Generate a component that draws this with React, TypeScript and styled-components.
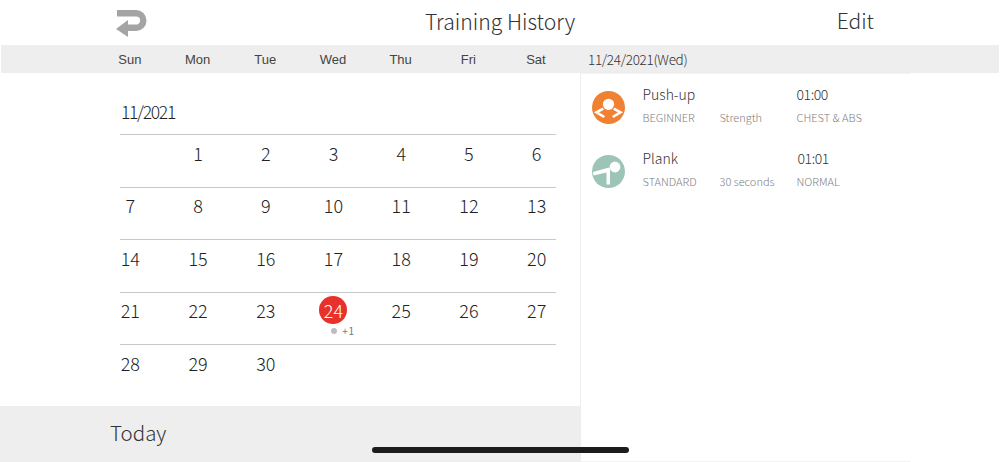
import { createGlobalStyle, styled } from "styled-components";

const weeks: (number | null)[][] = [
  [null, 1, 2, 3, 4, 5, 6],
  [7, 8, 9, 10, 11, 12, 13],
  [14, 15, 16, 17, 18, 19, 20],
  [21, 22, 23, 24, 25, 26, 27],
  [28, 29, 30, null, null, null, null],
];

const dayNames = ["Sun", "Mon", "Tue", "Wed", "Thu", "Fri", "Sat"];

const GlobalStyle = createGlobalStyle`
  html, body { margin: 0; padding: 0; background: #fff; }
  body {
    width: 1000px;
    height: 462px;
    overflow: hidden;
    font-family: "Noto Sans CJK JP", "Noto Sans", sans-serif;
    font-weight: 300;
    color: #333;
  }
`;

const Screen = styled.div`
  position: relative;
  width: 1000px;
  height: 462px;
  display: flex;
  flex-direction: column;
  overflow: hidden;
`;

const Header = styled.header`
  height: 45px;
  display: grid;
  grid-template-columns: 1fr auto 1fr;
  align-items: center;
  padding: 0 126px;
`;

const BackButton = styled.div`
  display: flex;
  align-items: center;
  margin-left: -11px;
`;

const Title = styled.h1`
  margin: 0 0 3px;
  font-size: 21.2px;
  font-weight: 300;
  line-height: 42px;
  color: #333;
`;

const EditLink = styled.div`
  justify-self: end;
  font-size: 21px;
  line-height: 41px;
  margin-bottom: 4px;
  color: #333;
`;

const Band = styled.div`
  height: 28px;
  margin: 0 1px;
  background: #eeeeee;
  display: flex;
  align-items: center;
`;

const WeekDays = styled.div`
  width: 579px;
  padding-left: 95px;
  box-sizing: border-box;
  display: grid;
  grid-template-columns: repeat(7, 67.7px);
`;

const WeekDay = styled.div`
  text-align: center;
  font-family: "Liberation Sans", Arial, sans-serif;
  font-size: 13px;
  font-weight: 400;
  color: #444;
`;

const SelectedDate = styled.div`
  padding-left: 8px;
  font-size: 13.5px;
  letter-spacing: -0.3px;
  color: #333;
`;

const Body = styled.main`
  flex: 1;
  display: flex;
  min-height: 0;
`;

const LeftColumn = styled.section`
  width: 580px;
  display: flex;
  flex-direction: column;
  flex-shrink: 0;
`;

const Calendar = styled.div`
  height: 333px;
  padding: 27px 0 0 120px;
  box-sizing: border-box;
`;

const MonthLabel = styled.div`
  height: 34px;
  padding-left: 1px;
  font-size: 17.5px;
  letter-spacing: -1.3px;
  line-height: 24px;
  color: #222;
`;

const Week = styled.div`
  width: 436px;
  height: 52.5px;
  box-sizing: border-box;
  border-top: 1.5px solid #c8c8c8;
`;

const WeekCells = styled.div`
  margin: 0 -14px 0 -24px;
  display: grid;
  grid-template-columns: repeat(7, 1fr);
`;

const DayCell = styled.div`
  position: relative;
  height: 40px;
  display: flex;
  justify-content: center;
  align-items: center;
`;

const DayNumber = styled.span<{ $active?: boolean }>`
  width: 28px;
  height: 28px;
  margin: -5px 0 0 1px;
  border-radius: 50%;
  display: flex;
  align-items: center;
  justify-content: center;
  font-size: 18px;
  background: ${(p) => (p.$active ? "#e8312a" : "transparent")};
  color: ${(p) => (p.$active ? "#fff" : "#222")};
`;

const RecordMark = styled.div`
  position: absolute;
  left: 32px;
  top: 32px;
  display: flex;
  align-items: center;
  gap: 5px;
  font-size: 10px;
  font-weight: 400;
  line-height: 12px;
  word-spacing: -1.5px;
  color: #777;
  white-space: nowrap;
`;

const MarkDot = styled.span`
  width: 6px;
  height: 6px;
  border-radius: 50%;
  background: #bdbdbd;
`;

const TodayBar = styled.div`
  flex: 1;
  background: #eeeeee;
  padding: 0 0 4px 110px;
  display: flex;
  align-items: center;
  font-size: 20.5px;
  color: #333;
`;

const RightColumn = styled.section`
  width: 330px;
  box-sizing: border-box;
  border-left: 1.5px solid #eeeeee;
  border-top: 1px solid #f3f3f3;
  border-bottom: 1px solid #f3f3f3;
  padding: 0 0 0 10.5px;
  display: flex;
  flex-direction: column;
`;

const Record = styled.article`
  height: 64px;
  display: grid;
  grid-template-columns: 51px 77px 77px auto;
  grid-template-rows: 32px 14px;
  align-items: center;
  &:first-child { margin-top: 4px; }
`;

const RecordIcon = styled.div`
  grid-row: 1 / span 2;
  width: 33px;
  height: 33px;
  align-self: start;
  margin-top: 12.5px;
`;

const RecordName = styled.div`
  grid-column: 2 / span 2;
  font-size: 14px;
  color: #333;
`;

const RecordTime = styled.div<{ $nudge?: number }>`
  font-size: 14px;
  letter-spacing: -0.4px;
  color: #333;
  padding-left: ${(p) => p.$nudge ?? 0}px;
`;

const RecordMeta = styled.div`
  font-size: 11px;
  color: #808080;
  white-space: nowrap;
`;

const HomeIndicator = styled.div`
  position: absolute;
  left: 372px;
  top: 447px;
  width: 257px;
  height: 6px;
  border-radius: 3px;
  background: #1c1c1c;
`;

const BackIcon = () => (
  <svg width="33" height="28" viewBox="0 0 33 28" style={{ display: "block", marginTop: "3px" }}>
    <path
      d="M2 3.2H21a7.3 7.3 0 0 1 0 14.6H9"
      fill="none"
      stroke="#a4a4a4"
      strokeWidth="6.4"
    />
    <path d="M1 19L13 10V27Z" fill="#a4a4a4" />
  </svg>
);

const PushUpIcon = () => (
  <svg width="33" height="33" viewBox="0 0 33 33">
    <circle cx="16.5" cy="16.5" r="16.5" fill="#f08032" />
    <circle cx="16.5" cy="13.3" r="5.6" fill="#fff" />
    <path
      d="M11.3 17.7L4.5 21.3L12.3 26M21.7 17.7L28.5 21.3L20.7 26"
      fill="none"
      stroke="#fff"
      strokeWidth="2.6"
    />
  </svg>
);

const PlankIcon = () => (
  <svg width="33" height="33" viewBox="0 0 33 33">
    <circle cx="16.5" cy="16.5" r="16.5" fill="#9cc5b8" />
    <circle cx="23" cy="12" r="5.4" fill="#fff" />
    <path d="M1 17L17 12.5L18 13.5V29.5H14.5V17.5L1.5 20.5Z" fill="#fff" />
  </svg>
);

export default function App() {
  return (
    <Screen>
      <GlobalStyle />
      <Header>
        <BackButton>
          <BackIcon />
        </BackButton>
        <Title>Training History</Title>
        <EditLink>Edit</EditLink>
      </Header>
      <Band>
        <WeekDays>
          {dayNames.map((d) => (
            <WeekDay key={d}>{d}</WeekDay>
          ))}
        </WeekDays>
        <SelectedDate>11/24/2021(Wed)</SelectedDate>
      </Band>
      <Body>
        <LeftColumn>
          <Calendar>
            <MonthLabel>11/2021</MonthLabel>
            {weeks.map((week, i) => (
              <Week key={i}>
                <WeekCells>
                  {week.map((day, j) => (
                    <DayCell key={j}>
                      {day !== null && <DayNumber $active={day === 24}>{day}</DayNumber>}
                      {day === 24 && (
                        <RecordMark>
                          <MarkDot />+ 1
                        </RecordMark>
                      )}
                    </DayCell>
                  ))}
                </WeekCells>
              </Week>
            ))}
          </Calendar>
          <TodayBar>Today</TodayBar>
        </LeftColumn>
        <RightColumn>
          <Record>
            <RecordIcon>
              <PushUpIcon />
            </RecordIcon>
            <RecordName>Push-up</RecordName>
            <RecordTime>01:00</RecordTime>
            <RecordMeta>BEGINNER</RecordMeta>
            <RecordMeta>Strength</RecordMeta>
            <RecordMeta>CHEST &amp; ABS</RecordMeta>
          </Record>
          <Record>
            <RecordIcon>
              <PlankIcon />
            </RecordIcon>
            <RecordName>Plank</RecordName>
            <RecordTime $nudge={1}>01:01</RecordTime>
            <RecordMeta>STANDARD</RecordMeta>
            <RecordMeta>30 seconds</RecordMeta>
            <RecordMeta>NORMAL</RecordMeta>
          </Record>
        </RightColumn>
      </Body>
      <HomeIndicator />
    </Screen>
  );
}
